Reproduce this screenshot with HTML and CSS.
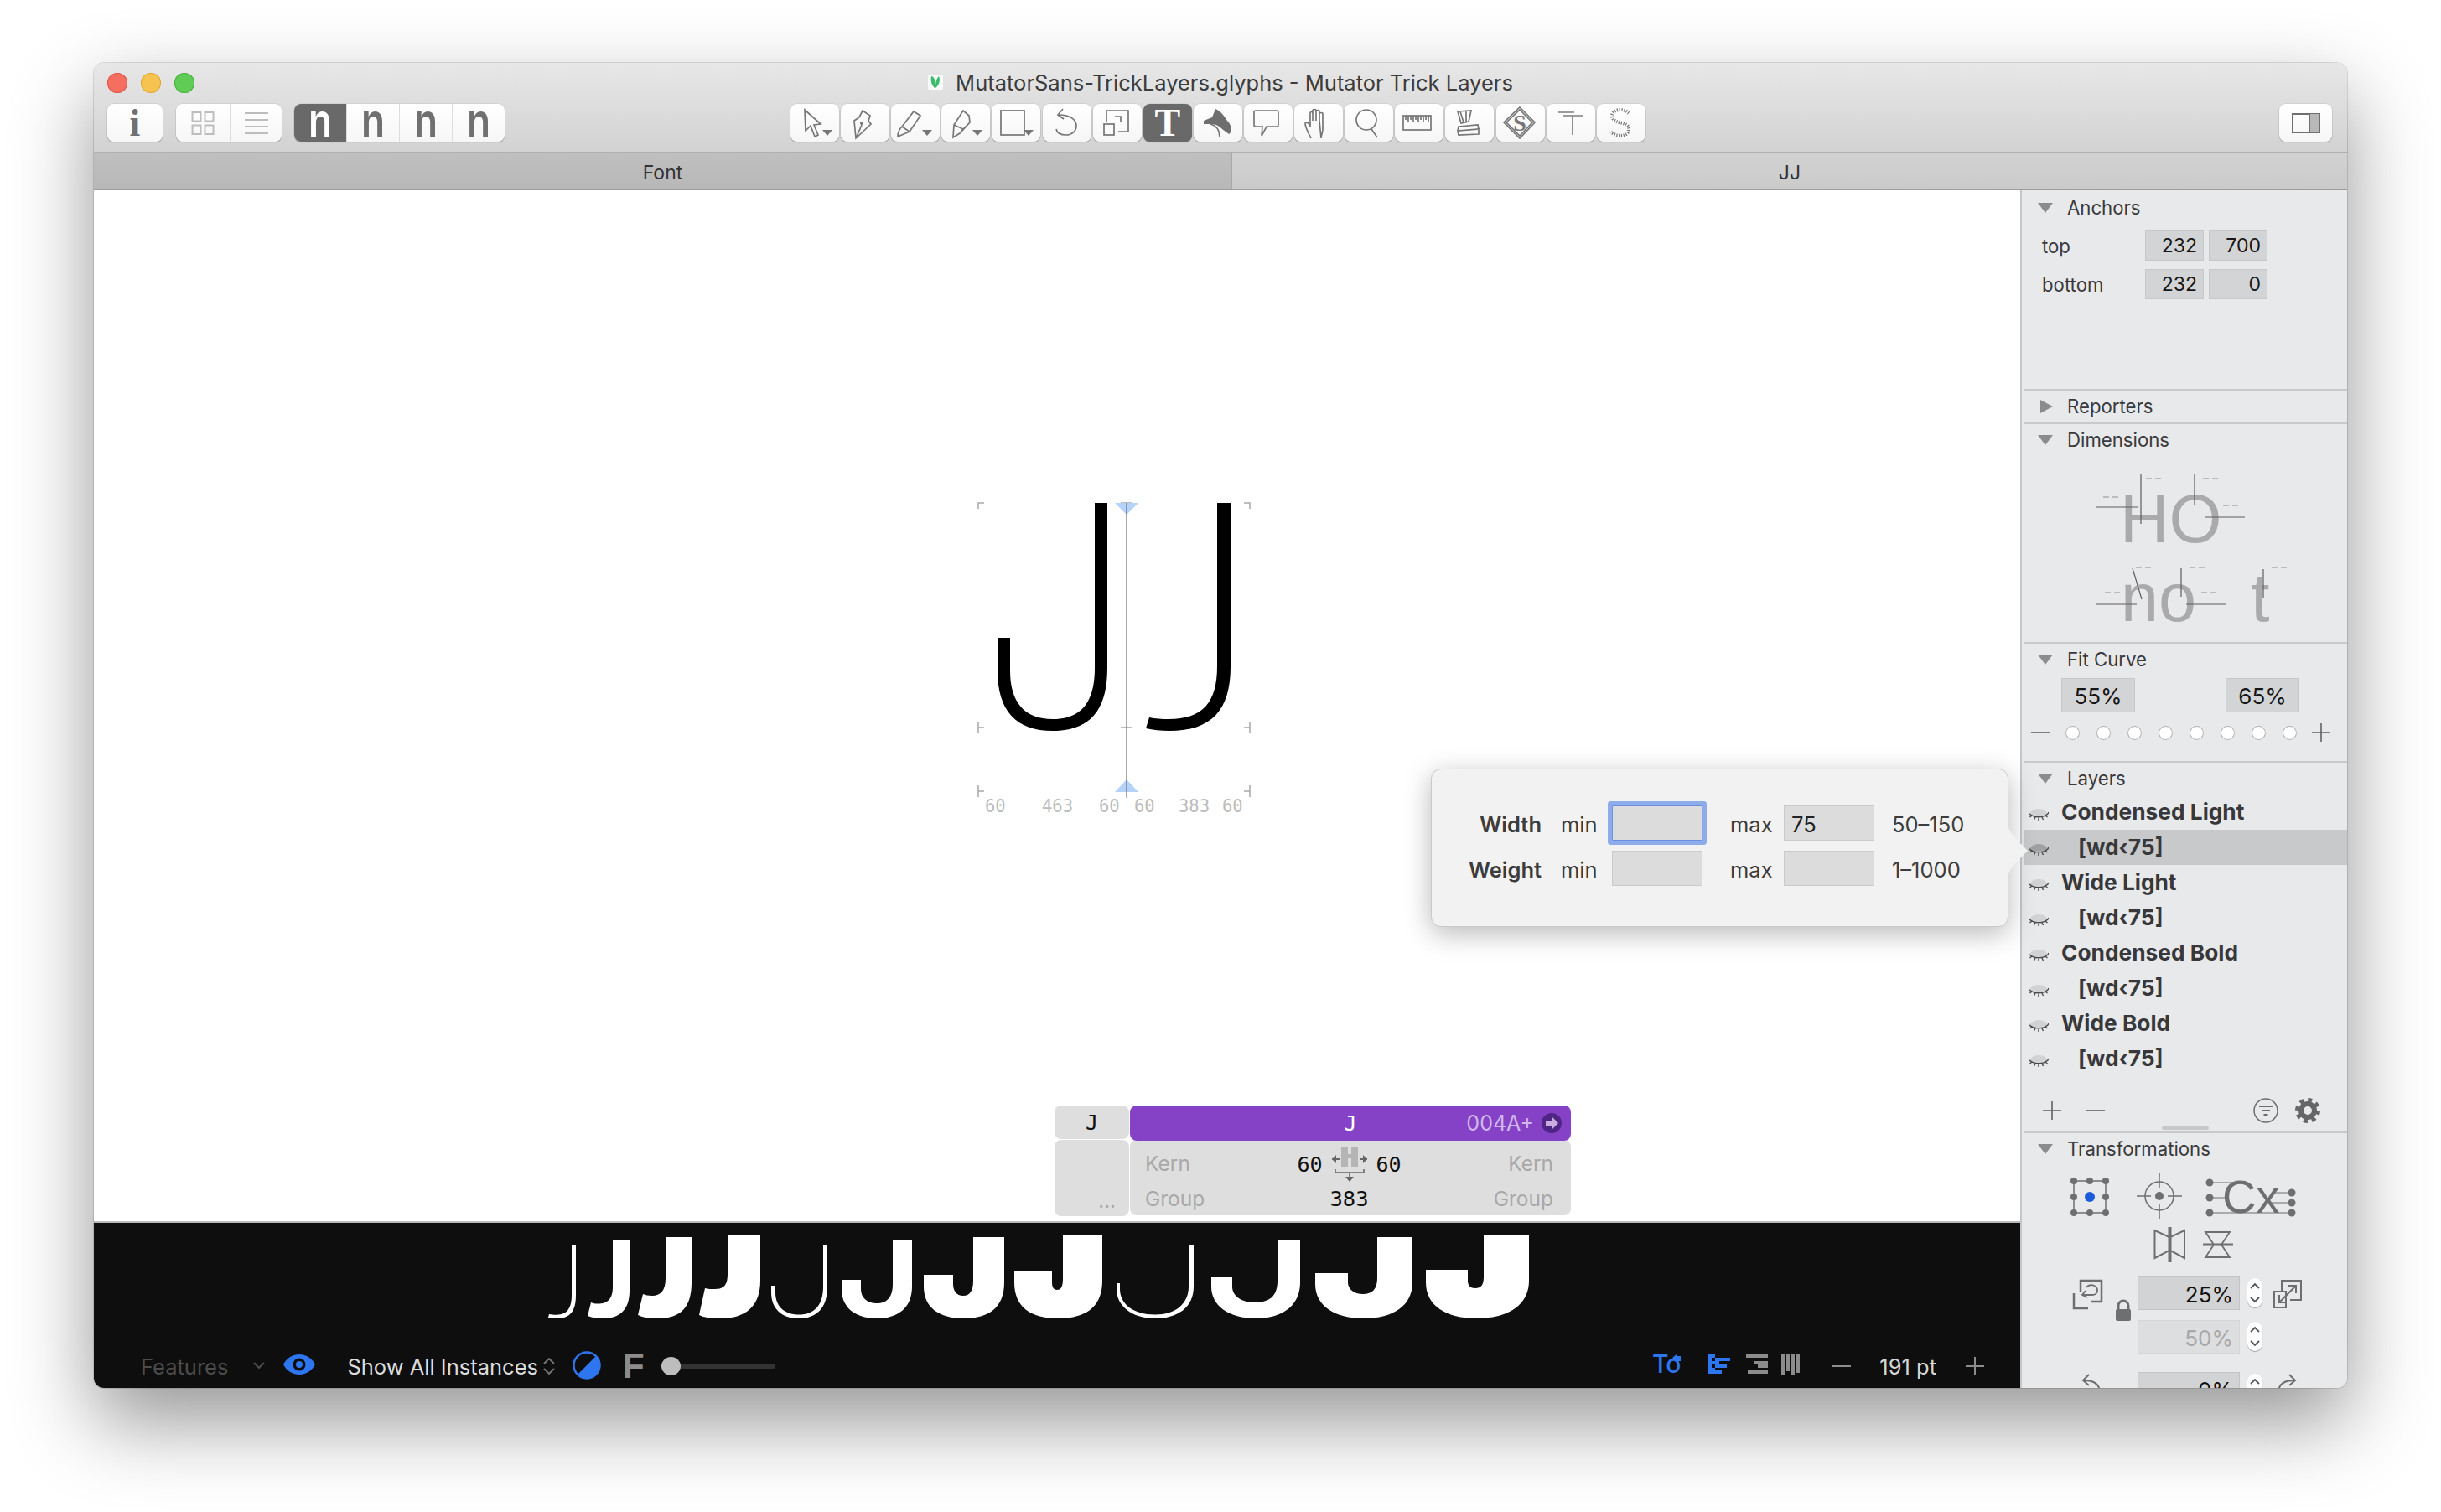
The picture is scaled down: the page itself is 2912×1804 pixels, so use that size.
FILE: index.html
```html
<!DOCTYPE html>
<html lang="en">
<head>
<meta charset="utf-8">
<title>MutatorSans-TrickLayers.glyphs - Mutator Trick Layers</title>
<link rel="stylesheet" href="styles.css">
</head>
<body>
<svg class="defs" width="0" height="0">
  <symbol id="eye" viewBox="0 0 24 18">
    <path d="M1 9 C5 1 19 1 23 9 C17 12 7 12 1 9Z" fill="currentColor"/>
    <path d="M1 9 C7 14 17 14 23 9 M4 11 L1.5 13 M8 13 L6.5 16 M12 14 L12 17 M16 13 L17.5 16 M20 11 L22.5 13 M1 9 L0 11 M23 9 L24 7" fill="none" stroke="#4a4a4c" stroke-width="1.4"/>
  </symbol>
  <symbol id="tri-down" viewBox="0 0 18 12"><path d="M0 0H18L9 12Z" fill="#8c8c8e"/></symbol>
  <symbol id="tri-small" viewBox="0 0 12 7"><path d="M0 0H12L6 7Z" fill="#767676"/></symbol>
</svg>
<div class="window">
  <header class="titlebar">
    <div class="title-row">
      <div class="lights">
        <span class="light light-red"></span>
        <span class="light light-yellow"></span>
        <span class="light light-green"></span>
      </div>
      <div class="title">
        <svg class="doc-icon" width="18" height="18" viewBox="0 0 18 18"><rect width="18" height="18" rx="2" fill="#fafafa"/><path d="M4 2C9 3 9 9 8 16C4 12 3 7 4 2ZM13 2C15 6 14 12 9 16C9 9 10 5 13 2Z" fill="#3dbb6c"/></svg>
        <span>MutatorSans-TrickLayers.glyphs - Mutator Trick Layers</span>
      </div>
      <div></div>
    </div>
    <div class="toolbar">
      <div class="btn btn-info"><span class="info-i">i</span></div>
      <div class="seg seg-view">
        <div class="seg-cell seg-a"><svg width="28" height="28" viewBox="0 0 28 28"><g fill="none" stroke="#bdbdbd" stroke-width="2"><rect x="1.5" y="1" width="10" height="10.5"/><rect x="16.5" y="1" width="10" height="10.5"/><rect x="1.5" y="16.5" width="10" height="10.5"/><rect x="16.5" y="16.5" width="10" height="10.5"/></g></svg></div>
        <div class="seg-cell seg-b"><svg width="28" height="28" viewBox="0 0 28 28"><path d="M0 2H28M0 10H28M0 18H28M0 26H28" stroke="#bdbdbd" stroke-width="2"/></svg></div>
      </div>
      <div class="seg seg-n">
        <div class="n-cell n-on"><span class="n-glyph">n</span></div>
        <div class="n-cell"><span class="n-glyph">n</span></div>
        <div class="n-cell"><span class="n-glyph">n</span></div>
        <div class="n-cell"><span class="n-glyph">n</span></div>
      </div>
      <div class="tools">
        <div class="tool"><svg viewBox="0 0 58 45"><path class="s" d="M17 7L18 32L24 26L29 39L33 37L28 25L36 24Z"/><use href="#tri-small" x="38" y="31" width="12" height="7"/></svg></div>
        <div class="tool"><svg viewBox="0 0 58 45"><path class="s" d="M18 41L16 20L22 16L26 8L35 14L33 20L36 24ZM18 41L25 25"/><circle cx="25" cy="23" r="2" fill="#767676"/></svg></div>
        <div class="tool"><svg viewBox="0 0 58 45"><path class="s" d="M8 39C8 33 10 30 13 27L27 9L35 14L22 33ZM13 27L22 33"/><use href="#tri-small" x="37" y="31" width="12" height="7"/></svg></div>
        <div class="tool"><svg viewBox="0 0 58 45"><path class="s" d="M14 40L15 25L26 8L33 14L34 22L22 35ZM15 25L26 30L22 35M26 30L34 22"/><use href="#tri-small" x="37" y="31" width="12" height="7"/></svg></div>
        <div class="tool"><svg viewBox="0 0 58 45"><rect class="s" x="11" y="8" width="28" height="29"/><use href="#tri-small" x="38" y="31" width="12" height="7"/></svg></div>
        <div class="tool"><svg viewBox="0 0 58 45"><path class="s" d="M24 6L18 13L25 18M19 13C33 13 40 19 40 26C40 33 34 37 28 37C22 37 17 35 16 30"/></svg></div>
        <div class="tool"><svg viewBox="0 0 58 45"><path class="s" d="M16 21V8H42V33H30M26 15H33V22"/><rect class="s" x="13" y="24" width="12" height="13"/></svg></div>
        <div class="tool tool-on"><span class="t-glyph">T</span></div>
        <div class="tool"><svg viewBox="0 0 58 45"><path d="M26 6C32 8 36 14 40 20C46 26 46 34 42 36L34 30C30 26 26 24 20 24L12 24L12 20L22 16Z" fill="#6e6e6e"/><path class="s" d="M20 24C28 26 31 32 31 40"/></svg></div>
        <div class="tool"><svg viewBox="0 0 58 45"><path class="s" d="M14 8H39Q41 8 41 10V25Q41 27 39 27H27L21 38L22 27H14Q12 27 12 25V10Q12 8 14 8Z"/></svg></div>
        <div class="tool"><svg viewBox="0 0 58 45"><path class="s" d="M20 41C17 35 13 28 13 23C15 21 18 23 19 27V11C19 9 22 9 22 11V20M22 20V8C22 6 26 6 26 8V20M26 20V9C26 7 30 7 30 9V20M30 20V12C30 10 34 10 34 12V30C34 34 32 37 32 41Z"/></svg></div>
        <div class="tool"><svg viewBox="0 0 58 45"><circle class="s" cx="26" cy="19" r="12"/><path class="s" d="M32 30L39 40"/></svg></div>
        <div class="tool"><svg viewBox="0 0 58 45"><rect class="s" x="10" y="14" width="33" height="17"/><path class="s" d="M13 14V19M16 14V22M19 14V19M22 14V22M25 14V19M28 14V22M31 14V19M34 14V22M37 14V19M40 14V22" stroke-width="1"/></svg></div>
        <div class="tool"><svg viewBox="0 0 58 45"><path class="s" d="M15 9L31 8L28 21L19 23ZM18 9L22 22M25 8L25 21M16 27L39 25L40 30L15 32ZM15 32L40 30L40 36L16 37Z"/></svg></div>
        <div class="tool"><svg class="tool-s" viewBox="0 0 58 45"><path class="s" d="M28 4L46 22L28 41L9 22Z"/><path class="s" d="M28 7L43 22L28 38L12 22Z" stroke-width="1"/><text x="28" y="32" class="s-glyph">S</text></svg></div>
        <div class="tool"><svg viewBox="0 0 58 45"><path class="s s-light" d="M14 10H33M19 14H43M31 14V37"/></svg></div>
        <div class="tool"><svg viewBox="0 0 58 45"><path class="s s-dash" d="M38 11C30 3 17 8 18 15C20 25 38 20 38 30C38 40 22 40 17 33"/></svg></div>
      </div>
      <div class="btn btn-side"><svg width="34" height="24" viewBox="0 0 34 24"><rect x="1" y="1" width="32" height="22" fill="none" stroke="#6f6f6f" stroke-width="2"/><rect x="21" y="1" width="12" height="22" fill="#b8b8b8"/><path d="M21 1V23" stroke="#6f6f6f" stroke-width="2"/></svg></div>
    </div>
  </header>
  <nav class="tabs">
    <div class="tab tab-font">Font</div>
    <div class="tab tab-jj">JJ</div>
  </nav>
  <main class="main">
    <section class="editor">
      <div class="canvas">
        <svg class="canvas-art" viewBox="112 227 2298 1230">
          <g fill="none" stroke="#a8a8a8" stroke-width="1.5">
            <path d="M1174 600H1167V607M1484 600H1491V607M1167 861V875M1167 868H1174M1491 861V875M1484 868H1491M1167 937V951M1167 944H1174M1491 937V951M1484 944H1491M1337 600H1351M1337 868H1351M1337 944H1351"/>
          </g>
          <path d="M1330 600H1358L1344 614ZM1344 930L1358 945H1330Z" fill="#b5d3fa"/>
          <path d="M1344 600V952" stroke="#6f6f6f" stroke-width="1.2"/>
          <path d="M1306 600H1321V797C1321 848 1300 872 1256 872C1212 872 1190 848 1190 800V761H1205V800C1205 838 1222 858 1256 858C1290 858 1306 838 1306 797Z"/>
          <path d="M1452 600H1468V795C1468 848 1445 872 1395 872C1385 872 1375 871 1367 869L1371 856C1378 857.500 1386 858 1394 858C1435 858 1452 838 1452 795Z"/>
          <g class="metric">
            <text x="1175" y="969">60</text>
            <text x="1243" y="969">463</text>
            <text x="1311" y="969">60</text>
            <text x="1353" y="969">60</text>
            <text x="1406" y="969">383</text>
            <text x="1458" y="969">60</text>
          </g>
        </svg>
      </div>
      <div class="preview">
        <svg class="preview-glyphs" width="1220" height="125" viewBox="0 9 1220 125" fill="#fff">
          <path d="M42 35H47V95C47 115 40 123 24 123C20 123 17 122.500 14 122L15 118C18 118.500 20 118.700 24 118.700C37 118.700 42 110 42 95Z"/>
          <path d="M91 30H111V90C111 112 100 123 80 123C73 123 67 122.500 61 120L65 104C68 105 70 105.500 73 105.500C85 105.500 91 100 91 85Z"/>
          <path d="M154 26H185V80C185 110 172 123 145 123C135 123 128 122 121 119L127 94C130 95 133 96 138 96C148 96 154 90 154 75Z"/>
          <path d="M228 23H267V78C267 108 250 123 220 123C208 123 200 122 194 119L201 87C205 88 208 88 213 88C222 88 228 85 228 70Z"/>
          <path d="M342 35H347V85C347 110 335 123 313 123C291 123 280 110 280 92V84H285V92C285 108 295 118.500 313 118.500C331 118.500 342 108 342 85Z"/>
          <path d="M425 30H448V85C448 110 432 123 406 123C380 123 364 110 364 88V77H387V88C387 98 394 105 406 105C418 105 425 98 425 82Z"/>
          <path d="M521 26H558V80C558 110 540 123 510 123C480 123 462 110 462 85V71H497V82C497 90 501 96 509 96C517 96 521 90 521 78Z"/>
          <path d="M628 23H675V78C675 110 655 123 622 123C590 123 570 110 570 80V67H615V80C615 86 617 89 621 89C626 89 628 85 628 75Z"/>
          <path d="M778 35H784V85C784 110 765 123 738 123C710 123 692 108 692 88V81H696V88C696 106 712 118.500 738 118.500C762 118.500 778 106 778 85Z"/>
          <path d="M884 30H911V80C911 108 890 123 858 123C826 123 805 108 805 85V74H830V85C830 97 842 104 857 104C874 104 884 97 884 78Z"/>
          <path d="M1003 26H1045V80C1045 108 1022 123 987 123C952 123 929 108 929 82V69H968V80C968 88 975 94 986 94C997 94 1003 88 1003 75Z"/>
          <path d="M1130 23H1184V78C1184 108 1158 123 1122 123C1085 123 1061 108 1061 80V65H1111V78C1111 84 1114 87 1120 87C1127 87 1130 83 1130 73Z"/>
        </svg>
        <div class="preview-bar">
          <div class="bar-left">
            <span class="features">Features</span>
            <svg class="chev" width="14" height="8" viewBox="0 0 14 8"><path d="M1 1L7 7L13 1" fill="none" stroke="#4f4f4f" stroke-width="2"/></svg>
            <svg class="eye-on" width="38" height="24" viewBox="0 0 38 24"><path d="M0 12C8 -4 30 -4 38 12C30 28 8 28 0 12Z" fill="#2e75f0"/><circle cx="19" cy="12" r="7.500" fill="#0e0e0e"/><circle cx="19" cy="12" r="4" fill="#2e75f0"/></svg>
            <span class="show-all">Show All Instances</span>
            <svg class="updown" width="16" height="22" viewBox="0 0 16 22"><path d="M2 8L8 2L14 8M2 14L8 20L14 14" fill="none" stroke="#777" stroke-width="1.800"/></svg>
            <svg class="halfmoon" width="34" height="34" viewBox="0 0 34 34"><circle cx="17" cy="17" r="15.500" fill="#0e0e0e" stroke="#2e75f0" stroke-width="2.500"/><path d="M28 6A15.500 15.500 0 0 1 6 28Z" fill="#2e75f0"/></svg>
            <span class="f-mark">F</span>
            <div class="slider"><span class="slider-knob"></span></div>
          </div>
          <div class="bar-right">
            <svg class="to-icon" width="34" height="30" viewBox="0 0 34 30"><text x="0" y="22" class="to-text">To</text><path d="M24 4L29 0V2H34V8H29V9Z" fill="#2e75f0"/></svg>
            <svg class="align-a" width="26" height="24" viewBox="0 0 26 24" fill="#2e75f0"><path d="M0 0H8V4H26V8H13V11H8V12H22V16H8V19H16V23H0ZM4 4V8H8V4ZM4 12V16H8V12Z" fill-rule="evenodd"/></svg>
            <svg class="align-b" width="26" height="24" viewBox="0 0 26 24" fill="#8c8c8c"><path d="M0 0H26V4H0ZM9 8H26V12H9ZM14 12H26V16H14ZM2 19H26V23H2Z"/></svg>
            <svg class="align-c" width="22" height="24" viewBox="0 0 22 24" fill="#8c8c8c"><path d="M0 0H4V24H0ZM6 0H10V20H6ZM12 0H16V24H12ZM18 0H22V22H18Z"/></svg>
            <svg class="minus" width="22" height="2" viewBox="0 0 22 2"><path d="M0 1H22" stroke="#8c8c8c" stroke-width="2"/></svg>
            <span class="pt">191 pt</span>
            <svg class="plus" width="22" height="22" viewBox="0 0 22 22"><path d="M0 11H22M11 0V22" stroke="#8c8c8c" stroke-width="2"/></svg>
          </div>
        </div>
      </div>
    </section>
    <aside class="sidebar">
      <section class="sec sec-anchors">
        <div class="sec-head"><svg class="tri" viewBox="0 0 18 12"><use href="#tri-down"/></svg><span>Anchors</span></div>
        <div class="anchor-row"><span class="anchor-name">top</span><span class="field f70">232</span><span class="field f70">700</span></div>
        <div class="anchor-row"><span class="anchor-name">bottom</span><span class="field f70">232</span><span class="field f70">0</span></div>
      </section>
      <section class="sec sec-reporters">
        <div class="sec-head"><svg class="tri tri-right" viewBox="0 0 18 12"><path d="M3 -2V14L18 6Z" fill="#8c8c8e"/></svg><span>Reporters</span></div>
      </section>
      <section class="sec sec-dim">
        <div class="sec-head"><svg class="tri" viewBox="0 0 18 12"><use href="#tri-down"/></svg><span>Dimensions</span></div>
        <svg class="dim-art" viewBox="14 544 386 222">
          <g class="dim-letters">
            <text x="129" y="647">HO</text>
            <text x="130" y="741">no</text>
            <text x="285" y="741">t</text>
          </g>
          <path d="M154 566V625M101 605H150M218 566V603M230 617H278M144 678L155 715M101 721H149M202 678V712M208 721H256M300 679V713" stroke="#5e5e5e" stroke-width="1.200" fill="none"/>
          <path d="M160 571H178M228 571H247M109 593H127M252 603H271M148 677H167M111 707H129M212 677H231M226 707H245M310 677H328" stroke="#bcbcbe" stroke-width="2" stroke-dasharray="7 4" fill="none"/>
        </svg>
      </section>
      <section class="sec sec-fit">
        <div class="sec-head"><svg class="tri" viewBox="0 0 18 12"><use href="#tri-down"/></svg><span>Fit Curve</span></div>
        <div class="fit-fields"><span class="field fit-field">55%</span><span class="field fit-field">65%</span></div>
        <div class="fit-slider">
          <svg class="fit-minus" width="22" height="22" viewBox="0 0 22 22"><path d="M0 11H22" stroke="#626264" stroke-width="1.600"/></svg>
          <span class="dot"></span><span class="dot"></span><span class="dot"></span><span class="dot"></span><span class="dot"></span><span class="dot"></span><span class="dot"></span><span class="dot"></span>
          <svg class="fit-plus" width="22" height="22" viewBox="0 0 22 22"><path d="M0 11H22M11 0V22" stroke="#626264" stroke-width="1.600"/></svg>
        </div>
      </section>
      <section class="sec sec-layers">
        <div class="sec-head"><svg class="tri" viewBox="0 0 18 12"><use href="#tri-down"/></svg><span>Layers</span></div>
        <div class="layer"><svg class="eye"><use href="#eye"/></svg><span class="layer-name">Condensed Light</span></div>
        <div class="layer layer-sel"><svg class="eye"><use href="#eye"/></svg><span class="layer-sub">[wd‹75]</span></div>
        <div class="layer"><svg class="eye"><use href="#eye"/></svg><span class="layer-name">Wide Light</span></div>
        <div class="layer"><svg class="eye"><use href="#eye"/></svg><span class="layer-sub">[wd‹75]</span></div>
        <div class="layer"><svg class="eye"><use href="#eye"/></svg><span class="layer-name">Condensed Bold</span></div>
        <div class="layer"><svg class="eye"><use href="#eye"/></svg><span class="layer-sub">[wd‹75]</span></div>
        <div class="layer"><svg class="eye"><use href="#eye"/></svg><span class="layer-name">Wide Bold</span></div>
        <div class="layer"><svg class="eye"><use href="#eye"/></svg><span class="layer-sub">[wd‹75]</span></div>
        <div class="layer-foot">
          <svg width="22" height="22" viewBox="0 0 22 22"><path d="M0 11H22M11 0V22" stroke="#626264" stroke-width="1.600"/></svg>
          <svg class="foot-minus" width="22" height="22" viewBox="0 0 22 22"><path d="M0 11H22" stroke="#626264" stroke-width="1.600"/></svg>
          <svg class="foot-filter" width="30" height="30" viewBox="0 0 30 30"><circle cx="15" cy="15" r="14" fill="none" stroke="#6e6e70" stroke-width="1.500"/><path d="M7 10H23M10 15H20M12.500 20H17.500" stroke="#6e6e70" stroke-width="1.800"/></svg>
          <svg class="foot-gear" width="30" height="30" viewBox="0 0 30 30"><circle cx="15" cy="15" r="12" fill="none" stroke="#666668" stroke-width="6" stroke-dasharray="4.700 4.700"/><circle cx="15" cy="15" r="8" fill="none" stroke="#666668" stroke-width="6"/></svg>
        </div>
        <div class="handle"></div>
      </section>
      <section class="sec sec-trans">
        <div class="sec-head"><svg class="tri" viewBox="0 0 18 12"><use href="#tri-down"/></svg><span>Transformations</span></div>
        <svg class="trans-art" viewBox="2414 1396 386 114">
          <g fill="#6e6f71">
            <path d="M2474 1409H2512V1447H2474Z" fill="none" stroke="#6e6f71" stroke-width="1.500"/>
            <circle cx="2474" cy="1409" r="4"/><circle cx="2493" cy="1409" r="4"/><circle cx="2512" cy="1409" r="4"/>
            <circle cx="2474" cy="1428" r="4"/><circle cx="2512" cy="1428" r="4"/>
            <circle cx="2474" cy="1447" r="4"/><circle cx="2493" cy="1447" r="4"/><circle cx="2512" cy="1447" r="4"/>
          </g>
          <circle cx="2493" cy="1428" r="6" fill="#1b5cdc"/>
          <circle cx="2576" cy="1427" r="17" fill="none" stroke="#6e6f71" stroke-width="1.500"/>
          <circle cx="2576" cy="1427" r="5" fill="#6e6f71"/>
          <path d="M2549 1427H2566M2586 1427H2603M2576 1400V1417M2576 1437V1454" stroke="#6e6f71" stroke-width="1.500"/>
          <text x="2651" y="1447" class="cx-text">Cx</text>
          <path d="M2636 1411H2672M2636 1429H2658M2636 1447H2734M2734 1423H2712M2734 1435H2710" stroke="#6e6f71" stroke-width="1.200" fill="none"/>
          <g fill="#6e6f71"><circle cx="2636" cy="1411" r="4.500"/><circle cx="2636" cy="1429" r="4.500"/><circle cx="2636" cy="1447" r="4.500"/><circle cx="2734" cy="1423" r="4.500"/><circle cx="2734" cy="1435" r="4.500"/><circle cx="2734" cy="1447" r="4.500"/></g>
          <path d="M2570.500 1468V1501L2588 1492V1476ZM2606 1468V1501L2589 1492V1476Z" fill="none" stroke="#6e6f71" stroke-width="2"/>
          <path d="M2588.500 1464V1506" stroke="#6e6f71" stroke-width="4"/>
          <path d="M2631 1470H2660L2650 1485L2660 1500H2631L2641 1485Z" fill="none" stroke="#6e6f71" stroke-width="1.800"/>
          <path d="M2628 1485H2664" stroke="#6e6f71" stroke-width="3"/>
        </svg>
        <div class="scale-row sr-1">
          <div class="scale-ico">
            <svg class="ico-left" width="86" height="52" viewBox="0 0 86 52"><g fill="none" stroke="#6e6f71" stroke-width="2.500"><path d="M18 16V3H43V28H30"/><path d="M10 18V36H27"/></g><g fill="none" stroke="#6e6f71" stroke-width="1.800"><path d="M24 15L20 20L26 23M20 20H32C38 20 40 14 36 10C32 7 27 8 25 11"/></g><path d="M63 38V33a6 6 0 0 1 12 0V38" fill="none" stroke="#6e6f71" stroke-width="3"/><rect x="60" y="37" width="18" height="14" rx="2" fill="#6e6f71"/></svg>
          </div>
          <span class="t-field">25%</span>
          <div class="stepper"><svg viewBox="0 0 18 35" width="18" height="35"><path d="M4 12L9 7L14 12M4 23L9 28L14 23" fill="none" stroke="#555" stroke-width="1.800"/></svg></div>
          <svg class="ico-right" width="34" height="34" viewBox="0 0 34 34"><g fill="none" stroke="#6e6f71" stroke-width="2"><path d="M10 14V1H33V24H20"/><path d="M1 14H15V33H1Z"/><path d="M7 27L27 7M18 7H27V16M7 18V27H16"/></g></svg>
        </div>
        <div class="scale-row sr-2">
          <div class="scale-ico"></div>
          <span class="t-field t-off">50%</span>
          <div class="stepper"><svg viewBox="0 0 18 35" width="18" height="35"><path d="M4 12L9 7L14 12M4 23L9 28L14 23" fill="none" stroke="#555" stroke-width="1.800"/></svg></div>
        </div>
        <div class="scale-row sr-3">
          <div class="scale-ico"><svg class="ico-rot" width="24" height="20" viewBox="0 0 24 20"><path d="M9 1L2 8L9 14M2 8C12 8 20 10 22 20" fill="none" stroke="#6e6f71" stroke-width="2"/></svg></div>
          <span class="t-field">0%</span>
          <div class="stepper"><svg viewBox="0 0 18 35" width="18" height="35"><path d="M4 12L9 7L14 12M4 23L9 28L14 23" fill="none" stroke="#555" stroke-width="1.800"/></svg></div>
          <svg class="ico-right-rot" width="24" height="20" viewBox="0 0 24 20"><path d="M15 1L22 8L15 14M22 8C12 8 4 10 2 20" fill="none" stroke="#6e6f71" stroke-width="2"/></svg>
        </div>
      </section>
    </aside>
    <div class="info">
      <div class="info-left">
        <div class="info-head-left">J</div>
        <div class="info-body-left">...</div>
      </div>
      <div class="info-right">
        <div class="info-head">
          <span class="info-j">J</span>
          <span class="info-code">004A+</span>
          <svg class="info-go" width="24" height="24" viewBox="0 0 24 24"><circle cx="12" cy="12" r="12" fill="#4f2585"/><path d="M5 9H12V4L20 12L12 20V15H5Z" fill="#c9addf"/></svg>
        </div>
        <div class="info-body">
          <span class="info-muted">Kern</span>
          <div class="info-mid">
            <span>60</span>
            <svg width="42" height="42" viewBox="0 0 42 42"><rect x="11" y="0" width="8" height="24" fill="#b5b5b5"/><rect x="23" y="0" width="8" height="24" fill="#b5b5b5"/><rect x="11" y="9" width="20" height="5" fill="#b5b5b5"/><path d="M0 15H9M33 15H42" stroke="#666" stroke-width="2"/><path d="M0 15L5 10V20ZM42 15L37 10V20Z" fill="#666"/><path d="M4 27V31H38V27M21 31C21 35 21 35 21 38" fill="none" stroke="#666" stroke-width="1.500"/><path d="M16 36H26L21 42Z" fill="#666"/></svg>
            <span>60</span>
          </div>
          <span class="info-muted info-r">Kern</span>
          <span class="info-muted">Group</span>
          <span class="info-num">383</span>
          <span class="info-muted info-r">Group</span>
        </div>
      </div>
    </div>
    <div class="popover">
      <svg class="pop-arrow" width="26" height="64" viewBox="0 0 26 64"><path d="M0 0C2 10 6 14 24 32C6 50 2 54 0 64Z" fill="#f2f2f2"/></svg>
      <div class="pop-grid">
        <span class="pop-label">Width</span>
        <span class="pop-text">min</span>
        <span class="pop-field pop-focus"></span>
        <span class="pop-text pop-max">max</span>
        <span class="pop-field">75</span>
        <span class="pop-text pop-range">50–150</span>
        <span class="pop-label">Weight</span>
        <span class="pop-text">min</span>
        <span class="pop-field"></span>
        <span class="pop-text pop-max">max</span>
        <span class="pop-field"></span>
        <span class="pop-text pop-range">1–1000</span>
      </div>
    </div>
  </main>
</div>
</body>
</html>
```
FILE: styles.css
```css
* { box-sizing: border-box; }
html, body { margin: 0; height: 100%; overflow: hidden; background: #fff; }
body { padding: 75px 0 0 112px; font-family: Inter, "Noto Sans", sans-serif; color: #333; }
.defs { position: absolute; }

.window {
  width: 2688px; height: 1581px; border-radius: 12px; overflow: hidden;
  display: flex; flex-direction: column; background: #fff;
  box-shadow: 0 0 0 1px rgba(0,0,0,.12), 0 40px 96px rgba(0,0,0,.42);
}

/* title bar */
.titlebar { height: 108px; flex: none; background: linear-gradient(#e7e7e7, #d2d2d2); border-bottom: 2px solid #b0b0b0; }
.title-row { height: 49px; display: grid; grid-template-columns: 1fr auto 1fr; align-items: center; }
.lights { display: flex; gap: 16px; padding-left: 16px; margin-top: -2px; }
.light { width: 24px; height: 24px; border-radius: 50%; }
.light-red { background: #f46f60; box-shadow: inset 0 0 0 1px #dc5a4c; }
.light-yellow { background: #f7c34f; box-shadow: inset 0 0 0 1px #dca63a; }
.light-green { background: #61cc55; box-shadow: inset 0 0 0 1px #4cb040; }
.title { display: flex; align-items: center; gap: 15px; font-size: 25.500px; color: #3c3c3c; margin-top: -3px; white-space: nowrap; }
.doc-icon { flex: none; }

.toolbar { display: flex; align-items: flex-start; height: 45px; padding-left: 16px; padding-right: 18px; }
.btn, .tool, .seg {
  height: 45px; background: linear-gradient(#fff, #f6f6f6); border-radius: 8px;
  box-shadow: 0 1px 1px rgba(0,0,0,.3), 0 0 0 .5px rgba(0,0,0,.1);
}
.btn { display: flex; align-items: center; justify-content: center; flex: none; }
.btn-info { width: 66px; }
.info-i { font: 700 46px/45px "Liberation Serif", serif; color: #707070; }
.seg { display: flex; flex: none; }
.seg-view { width: 126px; margin-left: 16px; }
.seg-cell { display: flex; align-items: center; justify-content: center; }
.seg-a { width: 65px; border-right: 1px solid #ddd; }
.seg-b { width: 61px; }
.seg-n { width: 251px; margin-left: 15px; }
.n-cell { flex: 1; display: flex; align-items: center; justify-content: center; border-left: 1px solid #ddd; color: #707070; height: 45px; }
.n-cell:first-child { border-left: 0; }
.n-on { background: #696969; color: #fff; border-radius: 8px 0 0 8px; }
.n-glyph { font: 600 56px/45px Inter, sans-serif; transform: scaleX(.82) translateY(-2px); display: block; }
.tools { display: flex; gap: 2.120px; margin-left: 341px; }
.tool { width: 58px; flex: none; display: flex; align-items: center; justify-content: center; }
.tool svg { width: 58px; height: 45px; display: block; }
.tool-on { background: #696969; }
.t-glyph { font: 700 46px/45px "Liberation Serif", serif; color: #fff; }
.s { fill: none; stroke: #767676; stroke-width: 1.700; }
.s-light { stroke: #7e7e7e; }
.s-dash { stroke-width: 4; stroke-dasharray: 1.200 1.600; stroke: #777; }
.s-glyph { font: 700 28px "Liberation Serif", serif; fill: #767676; text-anchor: middle; }
.btn-side { width: 63px; margin-left: auto; }

/* tabs */
.tabs { display: flex; height: 44px; flex: none; border-bottom: 2px solid #9c9c9c; font-size: 23px; color: #333; }
.tab { display: flex; align-items: center; justify-content: center; padding-top: 3px; }
.tab-font { width: 1358px; background: linear-gradient(#bfbfbf, #b8b8b8); border-right: 1px solid #a8a8a8; }
.tab-jj { flex: 1; background: linear-gradient(#d2d2d2, #cbcbcb); }

/* main */
.main { flex: 1; display: flex; position: relative; min-height: 0; }
.editor { width: 2298px; flex: none; display: flex; flex-direction: column; }
.canvas { height: 1230px; flex: none; background: #fff; position: relative; border-bottom: 0; }
.canvas-art { position: absolute; inset: 0; width: 100%; height: 100%; }
.metric text { font: 20.500px "DejaVu Sans Mono", monospace; fill: #bcbcbc; }

.preview { flex: 1; background: #0e0e0e; border-top: 2px solid #bbb; display: flex; flex-direction: column; padding-top: 0; }
.preview-glyphs { margin-left: 528px; display: block; flex: none; }
.preview-bar { display: flex; justify-content: space-between; align-items: center; height: 36px; margin-top: 28px; color: #ddd; font-size: 26px; }
.bar-left, .bar-right { display: flex; align-items: center; height: 36px; }
.features { margin-left: 56px; color: #4c4c4c; font-size: 25.500px; }
.chev { margin-left: 30px; margin-top: -2px; }
.eye-on { margin-left: 22px; margin-top: -4px; }
.show-all { margin-left: 38px; color: #dcdcdc; font-size: 25.500px; }
.updown { margin-left: 5px; }
.halfmoon { margin-left: 20px; margin-top: -2px; }
.f-mark { margin-left: 26px; font: 700 42px/36px "Liberation Sans", sans-serif; color: #8c8c8c; }
.slider { width: 136px; height: 6px; background: #333; border-radius: 3px; margin-left: 20px; position: relative; margin-top: -1px; }
.slider-knob { position: absolute; left: 0; top: -8px; width: 23px; height: 22px; border-radius: 50%; background: #bdbdbd; }
.bar-right { padding-right: 43px; }
.to-icon { margin-top: 2px; }
.to-text { font: 500 30px Inter, sans-serif; fill: #2e75f0; letter-spacing: -1px; }
.align-a { margin-left: 33px; margin-top: -4px; }
.align-b { margin-left: 19px; margin-top: -4px; }
.align-c { margin-left: 16px; margin-top: -4px; }
.minus { margin-left: 39px; }
.pt { margin-left: 34px; color: #d6d6d6; font-size: 25.500px; }
.plus { margin-left: 35px; }

/* sidebar */
.sidebar { flex: 1; min-width: 0; background: #e8e9eb; border-left: 2px solid #c6c6c8; padding-left: 2px; font-size: 22.200px; color: #3a3a3c; display: flex; flex-direction: column; overflow: hidden; }
.sec { flex: none; border-bottom: 2px solid #c8c9cb; }
.sec-head { height: 38px; display: flex; align-items: center; padding: 0 0 2px 17px; gap: 17px; }
.tri { width: 18px; height: 12px; flex: none; margin-top: 2px; }
.tri-right { overflow: visible; }
.sec-anchors { height: 239px; padding-top: 2px; }
.sec-reporters { height: 40px; }
.sec-dim { height: 262px; }
.sec-fit { height: 142px; }
.sec-layers { height: 442px; }
.sec-trans { border-bottom: 0; flex: 1; }

.anchor-row { display: flex; align-items: center; height: 36px; padding-left: 22px; margin-top: 10px; }
.sec-head + .anchor-row { margin-top: 8px; }
.anchor-name { width: 123px; }
.field { height: 36px; background: #d3d4d6; border: 1px solid #c6c7c9; color: #161616; display: flex; align-items: center; justify-content: flex-end; padding-right: 7px; font-size: 23px; }
.f70 { width: 70px; margin-right: 6px; }
.dim-art { display: block; width: 386px; height: 222px; }
.dim-letters text { font: 81px "Liberation Sans", sans-serif; fill: #aaaaac; }
.fit-fields { display: flex; padding-left: 45px; gap: 108px; margin-top: 3px; }
.fit-field { width: 88px; height: 41px; justify-content: center; padding: 2px 0 0; font-size: 26px; }
.fit-slider { display: flex; align-items: center; height: 24px; margin-top: 12px; padding-left: 9px; gap: 20px; }
.dot { width: 17px; height: 17px; border-radius: 50%; background: #fff; box-shadow: inset 0 0 0 1px #b0b0b0; flex: none; }
.fit-minus { margin-right: -1.500px; }
.fit-plus { margin-left: -1.500px; }

.layer { height: 42px; display: flex; align-items: center; padding-left: 6px; color: #d1d2d4; }
.layer-sel { background: #c8c9cb; color: #a0a1a3; }
.eye { width: 24px; height: 18px; flex: none; margin-top: 4px; }
.layer-name { margin-left: 15px; font-size: 26.300px; font-weight: 700; color: #38383a; white-space: nowrap; margin-top: -2px; }
.layer-sub { margin-left: 35px; font-size: 26.300px; font-weight: 700; color: #38383a; white-space: nowrap; margin-top: -2px; }
.layer-foot { display: flex; align-items: center; height: 40px; margin-top: 21px; padding-left: 23px; padding-right: 32px; }
.foot-minus { margin-left: 30px; }
.foot-filter { margin-left: auto; }
.foot-gear { margin-left: 20px; }
.handle { width: 56px; height: 4px; border-radius: 2px; background: #c6c7c9; margin: -1px 0 0 165px; }
.trans-art { display: block; width: 386px; height: 114px; margin-top: 6px; }
.scale-row { display: flex; align-items: flex-start; }
.sr-1 { margin-top: 13px; position: relative; z-index: 1; }
.sr-2 { margin-top: 12px; }
.sr-3 { margin-top: 22px; }
.scale-ico { width: 136px; height: 40px; flex: none; display: flex; justify-content: flex-end; }
.ico-left { flex: none; margin-top: 2px; overflow: visible; }
.t-field { width: 122px; height: 40px; flex: none; background: #d2d3d5; border: 1px solid #c2c3c5; color: #111; font-size: 26px; display: flex; align-items: center; justify-content: flex-end; padding: 3px 7px 0 0; }
.t-off { background: #dddee0; border-color: #d6d7d9; color: #a8a8aa; }
.stepper { width: 18px; height: 35px; flex: none; margin: 2px 0 0 9px; background: #fff; border-radius: 9px; box-shadow: 0 1px 1px rgba(0,0,0,.3); }
.stepper svg { display: block; }
.ico-right { margin: 4px 0 0 13px; flex: none; }
.ico-rot { margin: 2px 43px 0 0; }
.ico-right-rot { margin: 2px 0 0 17px; }
.cx-text { font: 56px "Liberation Sans", sans-serif; fill: #6e6f71; }

/* info box */
.info { position: absolute; left: 1146px; top: 1092px; display: flex; gap: 1px; width: 616px; height: 132px; font-size: 24px; }
.info-left { width: 89px; flex: none; display: flex; flex-direction: column; gap: 1px; }
.info-head-left { height: 40px; background: #dedede; border-radius: 8px; display: flex; align-items: center; justify-content: center; font: 25px "DejaVu Sans Mono", monospace; color: #111; }
.info-body-left { height: 91px; background: #dedede; border-radius: 8px; color: #aaa; display: flex; align-items: flex-end; justify-content: flex-end; padding: 0 16px 4px 0; }
.info-right { flex: 1; display: flex; flex-direction: column; }
.info-head { height: 42px; background: #8542c6; border-radius: 8px; display: flex; align-items: center; position: relative; color: #fff; }
.info-j { position: absolute; left: 0; right: 0; text-align: center; font: 25px "DejaVu Sans Mono", monospace; }
.info-code { margin-left: auto; color: #d0b8ec; font-size: 25px; }
.info-go { margin: 0 11px 0 9px; }
.info-body { height: 90px; background: #dedede; border-radius: 8px; margin-top: -1px; padding: 8px 21px 0 18px; display: grid; grid-template-columns: 1fr auto 1fr; grid-template-rows: 40px 40px; row-gap: 2px; align-items: center; }
.info-muted { color: #a8a8a8; font-size: 24.500px; }
.info-r { text-align: right; }
.info-mid { display: flex; align-items: center; gap: 11px; font: 25px "DejaVu Sans Mono", monospace; color: #111; margin-top: 2px; }
.info-num { text-align: center; font: 25.500px "DejaVu Sans Mono", monospace; color: #111; }

/* popover */
.popover { position: absolute; left: 1595px; top: 690px; width: 689px; height: 189px; background: #f2f2f2; border: 1px solid #c9c9c9; border-radius: 12px; box-shadow: 0 8px 32px rgba(0,0,0,.28); font-size: 25.500px; color: #3c3c3c; padding-top: 43px; z-index: 5; }
.pop-arrow { position: absolute; left: 687px; top: 65px; }
.pop-grid { display: grid; grid-template-columns: 131px 84px 108px 97px 108px 1fr; grid-template-rows: 42px 42px; row-gap: 12px; align-items: center; }
.pop-label { text-align: right; font-weight: 600; padding-top: 3px; }
.pop-text { padding: 3px 0 0 23px; }
.pop-max { padding-left: 33px; }
.pop-range { padding-left: 21px; white-space: nowrap; }
.pop-field { height: 42px; background: #dcdcdc; border: 1px solid #cacaca; padding: 3px 0 0 8px; display: flex; align-items: center; color: #222; }
.pop-focus { border-color: #6c8fe0; box-shadow: 0 0 0 5px #8eabec; border-radius: 1px; }
```
